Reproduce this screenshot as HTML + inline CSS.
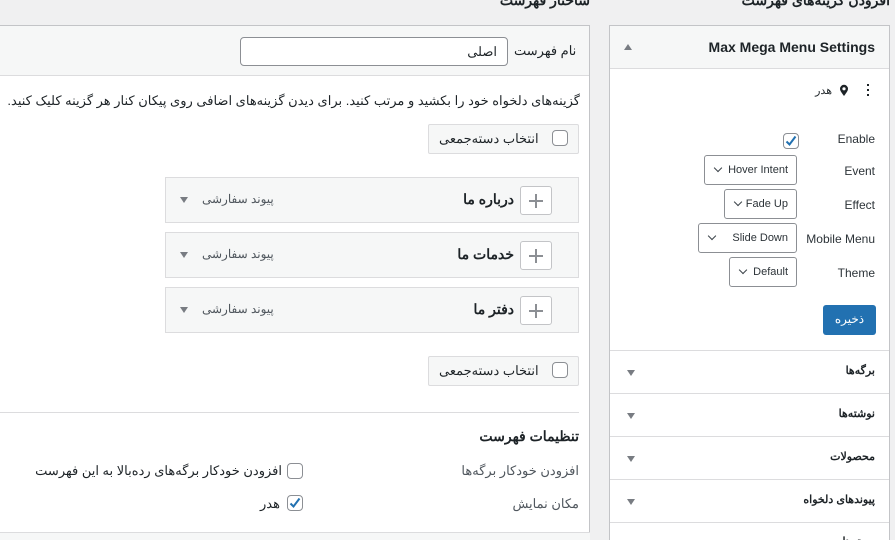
<!DOCTYPE html>
<html lang="fa"><head><meta charset="utf-8">
<style>
*{box-sizing:border-box;margin:0;padding:0}
html,body{width:895px;height:540px;overflow:hidden}
body{background:#f0f0f1;font-family:"Liberation Sans","Noto Sans CJK SC",sans-serif;font-size:13px;color:#1d2327;position:relative}
.a{position:absolute}
.rt{direction:rtl;white-space:nowrap}
.panel{background:#fff;border:1px solid #c3c4c7}
.cb{position:absolute;width:16px;height:16px;border:1px solid #8c8f94;border-radius:4px;background:#fff}
.sel{position:absolute;height:30px;border:1px solid #8c8f94;border-radius:3px;background:#fff;font-size:11px;color:#2c3338;line-height:28px;text-align:right;padding-right:8px;white-space:nowrap}
.sel:before{content:"";position:absolute;left:10px;top:9px;width:5px;height:5px;border-right:1.5px solid #3c434a;border-bottom:1.5px solid #3c434a;transform:rotate(45deg)}
.item{position:absolute;left:165px;width:414px;height:46px;background:#f6f7f7;border:1px solid #dcdcde}
.plus{position:absolute;right:26px;top:8px;width:32px;height:29px;border:1px solid #c3c4c7;border-radius:3px;background:#fff}
.plus:before{content:"";position:absolute;left:8px;top:13px;width:14px;height:2px;background:#8c8f94}
.plus:after{content:"";position:absolute;left:14px;top:7px;width:2px;height:14px;background:#8c8f94}
.tri{position:absolute;width:0;height:0;border-left:4px solid transparent;border-right:4px solid transparent;border-top:6px solid #787c82}
.row{position:absolute;left:0;width:100%;border-top:1px solid #dcdcde;height:43px}
</style></head><body>
<div class="a rt" style="right:305px;top:-8px;font-weight:bold;font-size:14px">ساختار فهرست</div>
<div class="a rt" style="right:5px;top:-8px;font-weight:bold;font-size:14px">افزودن گزینه‌های فهرست</div>

<div class="a panel" style="left:-2px;top:25px;width:592px;height:508px;background:#fff"></div>
<div class="a" style="left:-1px;top:26px;width:590px;height:50px;background:#f6f7f7;border-bottom:1px solid #dcdcde"></div>
<div class="a rt" style="left:514px;top:43px;font-size:13px">نام فهرست</div>
<div class="a rt" style="left:240px;top:37px;width:268px;height:29px;border:1px solid #8c8f94;border-radius:4px;background:#fff;padding-right:10px;line-height:27px;text-align:right">اصلی</div>
<div class="a rt" style="right:315px;top:93px;width:600px;text-align:right">گزینه‌های دلخواه خود را بکشید و مرتب کنید. برای دیدن گزینه‌های اضافی روی پیکان کنار هر گزینه کلیک کنید.</div>
<div class="a" style="left:428px;top:124px;width:151px;height:30px;background:#f6f7f7;border:1px solid #dcdcde;border-radius:2px"></div>
<div class="cb" style="left:552px;top:130px"></div>
<div class="a rt" style="left:439px;top:131px">انتخاب دسته‌جمعی</div>

<div class="item" style="top:177px"><div class="plus"></div><div class="a rt" style="right:64px;top:13px;font-weight:bold;font-size:14px">درباره ما</div><div class="a rt" style="left:36px;top:14px;font-size:12px;color:#50575e">پیوند سفارشی</div><div class="tri" style="left:14px;top:19px"></div></div>
<div class="item" style="top:232px"><div class="plus"></div><div class="a rt" style="right:64px;top:13px;font-weight:bold;font-size:14px">خدمات ما</div><div class="a rt" style="left:36px;top:14px;font-size:12px;color:#50575e">پیوند سفارشی</div><div class="tri" style="left:14px;top:19px"></div></div>
<div class="item" style="top:287px"><div class="plus"></div><div class="a rt" style="right:64px;top:13px;font-weight:bold;font-size:14px">دفتر ما</div><div class="a rt" style="left:36px;top:14px;font-size:12px;color:#50575e">پیوند سفارشی</div><div class="tri" style="left:14px;top:19px"></div></div>

<div class="a" style="left:428px;top:356px;width:151px;height:30px;background:#f6f7f7;border:1px solid #dcdcde;border-radius:2px"></div>
<div class="cb" style="left:552px;top:362px"></div>
<div class="a rt" style="left:439px;top:363px">انتخاب دسته‌جمعی</div>
<div class="a" style="left:0;top:412px;width:579px;height:1px;background:#dcdcde"></div>
<div class="a rt" style="right:316px;top:428px;font-weight:bold;font-size:14px">تنظیمات فهرست</div>
<div class="a rt" style="right:316px;top:463px;color:#50575e">افزودن خودکار برگه‌ها</div>
<div class="cb" style="left:287px;top:463px"></div>
<div class="a rt" style="right:613px;top:463px">افزودن خودکار برگه‌های رده‌بالا به این فهرست</div>
<div class="a rt" style="right:316px;top:496px;color:#50575e">مکان نمایش</div>
<div class="cb" style="left:287px;top:495px"><svg width="14" height="14" viewBox="0 0 14 14" style="position:absolute;left:0;top:0"><path d="M2.5 7.5l3 3 6-8" fill="none" stroke="#2271b1" stroke-width="2"/></svg></div>
<div class="a rt" style="right:615px;top:496px">هدر</div>
<div class="a" style="left:0;top:532px;width:590px;height:8px;background:#f6f7f7;border-top:1px solid #dcdcde"></div>

<div class="a panel" style="left:609px;top:25px;width:281px;height:530px">
  <div class="a" style="left:0;top:0;width:100%;height:43px;background:#f6f7f7;border-bottom:1px solid #dcdcde"></div>
  <div class="a" style="right:14px;top:13px;font-weight:bold;font-size:14px">Max Mega Menu Settings</div>
  <div class="a" style="left:14px;top:18px;width:0;height:0;border-left:4px solid transparent;border-right:4px solid transparent;border-bottom:6px solid #787c82"></div>
  <div class="a" style="left:257px;top:58px;width:2px;height:2px;background:#1d2327;box-shadow:0 5px 0 #1d2327,0 10px 0 #1d2327"></div>
  <svg class="a" style="left:229px;top:58px" width="10" height="13" viewBox="0 0 10 13"><path d="M5 12C2 8 1 6.5 1 4.8A4 4 0 0 1 9 4.8C9 6.5 8 8 5 12Z" fill="#1d2327"/><circle cx="5" cy="4.8" r="1.6" fill="#fff"/></svg>
  <div class="a rt" style="right:57px;top:58px;font-size:11px">هدر</div>
  <div class="a" style="right:14px;top:106px;font-size:12px;color:#2c3338">Enable</div>
  <div class="cb" style="left:173px;top:107px"><svg width="14" height="14" viewBox="0 0 14 14" style="position:absolute;left:0;top:0"><path d="M2.5 7.5l3 3 6-8" fill="none" stroke="#2271b1" stroke-width="2"/></svg></div>
  <div class="a" style="right:14px;top:138px;font-size:12px;color:#2c3338">Event</div>
  <div class="sel" style="left:94px;top:129px;width:93px">Hover Intent</div>
  <div class="a" style="right:14px;top:172px;font-size:12px;color:#2c3338">Effect</div>
  <div class="sel" style="left:114px;top:163px;width:73px">Fade Up</div>
  <div class="a" style="right:14px;top:206px;font-size:12px;color:#2c3338">Mobile Menu</div>
  <div class="sel" style="left:88px;top:197px;width:99px">Slide Down</div>
  <div class="a" style="right:14px;top:240px;font-size:12px;color:#2c3338">Theme</div>
  <div class="sel" style="left:119px;top:231px;width:68px">Default</div>
  <div class="a rt" style="left:213px;top:279px;width:53px;height:30px;background:#2271b1;border-radius:3px;color:#fff;text-align:center;line-height:29px;font-size:12px">ذخیره</div>
  <div class="row" style="top:324px;background:#fff"><div class="a rt" style="right:14px;top:13px;font-weight:bold;font-size:11px">برگه‌ها</div><div class="tri" style="left:17px;top:19px"></div></div>
  <div class="row" style="top:367px"><div class="a rt" style="right:14px;top:13px;font-weight:bold;font-size:11px">نوشته‌ها</div><div class="tri" style="left:17px;top:19px"></div></div>
  <div class="row" style="top:410px"><div class="a rt" style="right:14px;top:13px;font-weight:bold;font-size:11px">محصولات</div><div class="tri" style="left:17px;top:19px"></div></div>
  <div class="row" style="top:453px"><div class="a rt" style="right:14px;top:13px;font-weight:bold;font-size:11px">پیوندهای دلخواه</div><div class="tri" style="left:17px;top:19px"></div></div>
  <div class="row" style="top:496px"><div class="a rt" style="right:14px;top:12px;font-weight:bold;font-size:11px">دسته‌ها</div></div>
</div>
</body></html>
